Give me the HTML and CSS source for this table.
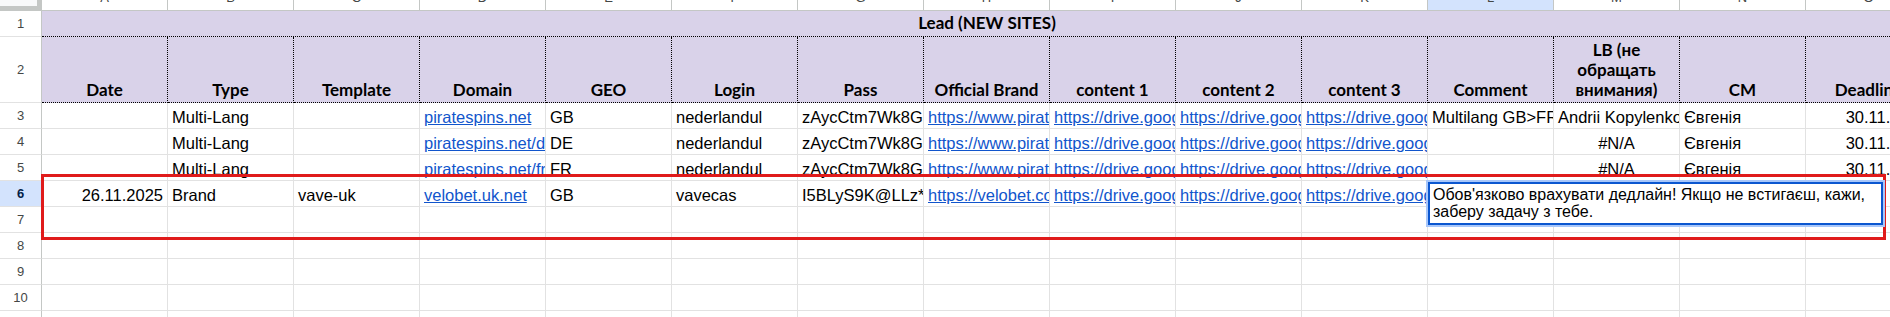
FILE: index.html
```html
<!DOCTYPE html>
<html lang="uk">
<head>
<meta charset="utf-8">
<title>Lead (NEW SITES)</title>
<link rel="stylesheet" href="styles.css">
</head>
<body>
<div class="sheet">
  <table class="grid">
    <colgroup>
      <col class="col-rh">
      <col class="col"><col class="col"><col class="col"><col class="col"><col class="col">
      <col class="col"><col class="col"><col class="col"><col class="col"><col class="col">
      <col class="col"><col class="col"><col class="col"><col class="col"><col class="col">
    </colgroup>
    <tr class="r-letters">
      <th class="corner"></th>
      <th class="ch"><div class="chl">A</div></th>
      <th class="ch"><div class="chl">B</div></th>
      <th class="ch"><div class="chl">C</div></th>
      <th class="ch"><div class="chl">D</div></th>
      <th class="ch"><div class="chl">E</div></th>
      <th class="ch"><div class="chl">F</div></th>
      <th class="ch"><div class="chl">G</div></th>
      <th class="ch"><div class="chl">H</div></th>
      <th class="ch"><div class="chl">I</div></th>
      <th class="ch"><div class="chl">J</div></th>
      <th class="ch"><div class="chl">K</div></th>
      <th class="ch sel"><div class="chl">L</div></th>
      <th class="ch"><div class="chl">M</div></th>
      <th class="ch"><div class="chl">N</div></th>
      <th class="ch"><div class="chl">O</div></th>
    </tr>
    <tr class="r-title">
      <th class="rh">1</th>
      <td class="title" colspan="15">Lead (NEW SITES)</td>
    </tr>
    <tr class="r-head">
      <th class="rh">2</th>
      <td class="hd">Date</td>
      <td class="hd">Type</td>
      <td class="hd">Template</td>
      <td class="hd">Domain</td>
      <td class="hd">GEO</td>
      <td class="hd">Login</td>
      <td class="hd">Pass</td>
      <td class="hd">Official Brand</td>
      <td class="hd">content 1</td>
      <td class="hd">content 2</td>
      <td class="hd">content 3</td>
      <td class="hd">Comment</td>
      <td class="hd">LB (не<br>обращать<br>внимания)</td>
      <td class="hd">CM</td>
      <td class="hd">Deadline</td>
    </tr>
    <tr class="r">
      <th class="rh">3</th>
      <td></td>
      <td>Multi-Lang</td>
      <td></td>
      <td><a href="#">piratespins.net</a></td>
      <td>GB</td>
      <td>nederlandul</td>
      <td>zAycCtm7Wk8G</td>
      <td><a href="#">https://www.piratespins.net/</a></td>
      <td><a href="#">https://drive.google.com/drive/folders/1</a></td>
      <td><a href="#">https://drive.google.com/drive/folders/2</a></td>
      <td><a href="#">https://drive.google.com/drive/folders/3</a></td>
      <td>Multilang GB&gt;FR+DE</td>
      <td>Andrii Kopylenko</td>
      <td>Євгенія</td>
      <td class="num">30.11.2025</td>
    </tr>
    <tr class="r">
      <th class="rh">4</th>
      <td></td>
      <td>Multi-Lang</td>
      <td></td>
      <td><a href="#">piratespins.net/de</a></td>
      <td>DE</td>
      <td>nederlandul</td>
      <td>zAycCtm7Wk8G</td>
      <td><a href="#">https://www.piratespins.net/de</a></td>
      <td><a href="#">https://drive.google.com/drive/folders/4</a></td>
      <td><a href="#">https://drive.google.com/drive/folders/5</a></td>
      <td><a href="#">https://drive.google.com/drive/folders/6</a></td>
      <td></td>
      <td class="ctr">#N/A</td>
      <td>Євгенія</td>
      <td class="num">30.11.2025</td>
    </tr>
    <tr class="r">
      <th class="rh">5</th>
      <td></td>
      <td>Multi-Lang</td>
      <td></td>
      <td><a href="#">piratespins.net/fr</a></td>
      <td>FR</td>
      <td>nederlandul</td>
      <td>zAycCtm7Wk8G</td>
      <td><a href="#">https://www.piratespins.net/fr</a></td>
      <td><a href="#">https://drive.google.com/drive/folders/7</a></td>
      <td><a href="#">https://drive.google.com/drive/folders/8</a></td>
      <td><a href="#">https://drive.google.com/drive/folders/9</a></td>
      <td></td>
      <td class="ctr">#N/A</td>
      <td>Євгенія</td>
      <td class="num">30.11.2025</td>
    </tr>
    <tr class="r">
      <th class="rh rh-sel">6</th>
      <td class="num">26.11.2025</td>
      <td>Brand</td>
      <td>vave-uk</td>
      <td><a href="#">velobet.uk.net</a></td>
      <td>GB</td>
      <td>vavecas</td>
      <td>I5BLyS9K@LLz*Q</td>
      <td><a href="#">https://velobet.com/</a></td>
      <td><a href="#">https://drive.google.com/drive/folders/a</a></td>
      <td><a href="#">https://drive.google.com/drive/folders/b</a></td>
      <td><a href="#">https://drive.google.com/drive/folders/c</a></td>
      <td></td>
      <td></td>
      <td></td>
      <td></td>
    </tr>
    <tr class="r"><th class="rh">7</th><td></td><td></td><td></td><td></td><td></td><td></td><td></td><td></td><td></td><td></td><td></td><td></td><td></td><td></td><td></td></tr>
    <tr class="r"><th class="rh">8</th><td></td><td></td><td></td><td></td><td></td><td></td><td></td><td></td><td></td><td></td><td></td><td></td><td></td><td></td><td></td></tr>
    <tr class="r"><th class="rh">9</th><td></td><td></td><td></td><td></td><td></td><td></td><td></td><td></td><td></td><td></td><td></td><td></td><td></td><td></td><td></td></tr>
    <tr class="r"><th class="rh">10</th><td></td><td></td><td></td><td></td><td></td><td></td><td></td><td></td><td></td><td></td><td></td><td></td><td></td><td></td><td></td></tr>
    <tr class="r"><th class="rh">11</th><td></td><td></td><td></td><td></td><td></td><td></td><td></td><td></td><td></td><td></td><td></td><td></td><td></td><td></td><td></td></tr>
  </table>
  <div class="annot"></div>
  <div class="editor">Обов'язково врахувати дедлайн! Якщо не встигаєш, кажи, заберу задачу з тебе.</div>
</div>
</body>
</html>
```

FILE: styles.css
```css
html, body {
  margin: 0;
  padding: 0;
  background: #ffffff;
  overflow: hidden;
}

.sheet {
  position: relative;
  width: 1890px;
  height: 317px;
  overflow: hidden;
}

.grid {
  border-collapse: separate;
  border-spacing: 0;
  table-layout: fixed;
  width: 1932px;
  font-family: "Liberation Sans", Arial, sans-serif;
  font-size: 16.5px;
  color: #000000;
}

.col-rh { width: 42px; }
.col { width: 126px; }

.grid td,
.grid th {
  box-sizing: border-box;
  padding: 0 0 1px 4px;
  border-right: 1px solid #e2e2e2;
  border-bottom: 1px solid #e2e2e2;
  overflow: hidden;
  white-space: nowrap;
  vertical-align: bottom;
  text-align: left;
  font-weight: normal;
  line-height: 20px;
}

.grid a {
  color: #1155cc;
  text-decoration: underline;
}

.num {
  text-align: right !important;
  padding-right: 4px !important;
}

.ctr {
  text-align: center !important;
  padding-left: 0 !important;
}

/* column letters */
.r-letters { height: 11px; }

.grid th.corner {
  background: #f8f9fa;
  border-right: 5px solid #c4c7c5;
  border-bottom: 5px solid #c4c7c5;
  padding: 0;
}

.grid th.ch {
  background: #ffffff;
  border-right: 1px solid #c4c7c5;
  border-bottom: 1px solid #c4c7c5;
  padding: 0;
  vertical-align: top;
  text-align: center;
}

.grid th.ch.sel { background: #d3e3fd; }

.chl {
  height: 10px;
  overflow: hidden;
  font-size: 13px;
  line-height: 14px;
  color: #444746;
}

.chl::before {
  content: "";
  display: block;
  margin-top: -9px;
}

/* row headers */
.grid th.rh {
  background: #ffffff;
  border-right: 1px solid #c4c7c5;
  border-bottom: 1px solid #e2e2e2;
  padding: 0;
  text-align: center;
  vertical-align: middle;
  font-size: 13px;
  color: #444746;
}

.grid th.rh-sel {
  background: #d3e3fd;
  color: #041e49;
  font-weight: bold;
}

/* header rows */
.r-title { height: 26px; }
.r-head { height: 66px; }
.r { height: 26px; }

.grid td.title {
  background: #d9d2e9;
  text-align: center;
  font-family: Lato, "Liberation Sans", sans-serif;
  font-weight: 700;
  font-size: 17px;
  border-right: none;
  border-bottom: 1px dotted #000000;
  padding: 0 0 3px 0;
}

.grid td.hd {
  background: #d9d2e9;
  text-align: center;
  font-family: Lato, "Liberation Sans", sans-serif;
  font-weight: 700;
  font-size: 17px;
  white-space: normal;
  border-right: 1px dotted #000000;
  border-bottom: 1px dotted #000000;
  padding: 0 0 2px 0;
}

/* overlays */
.annot {
  position: absolute;
  left: 41px;
  top: 174px;
  width: 1845px;
  height: 66px;
  box-sizing: border-box;
  border: 3px solid #e01b1b;
}

.editor {
  position: absolute;
  left: 1428px;
  top: 182px;
  width: 455px;
  height: 43px;
  box-sizing: border-box;
  border: 2px solid #0b57d0;
  box-shadow: 0 0 0 2px #a8c7fa;
  background: #ffffff;
  padding: 2px 4px 0 3px;
  font-family: "Liberation Sans", Arial, sans-serif;
  font-size: 16px;
  line-height: 17px;
  color: #000000;
}
```
